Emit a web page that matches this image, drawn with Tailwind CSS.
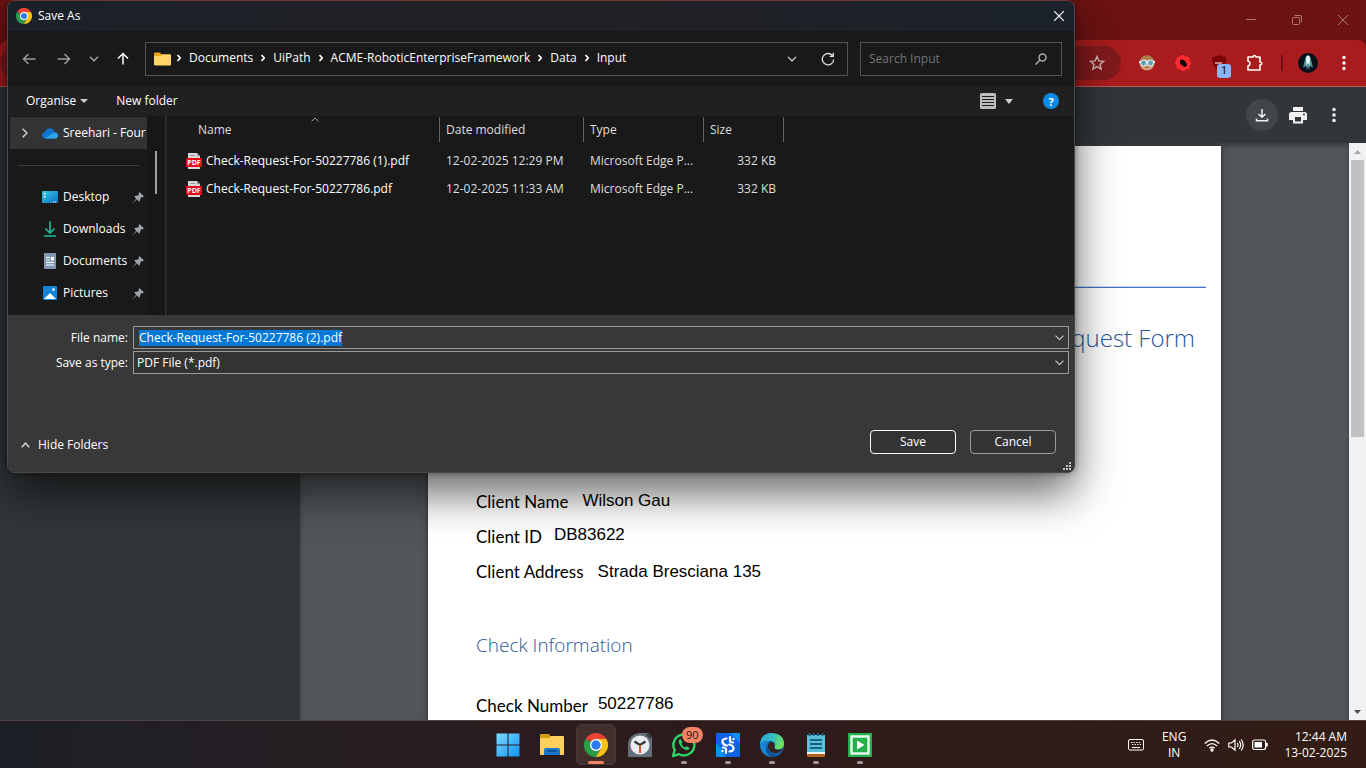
<!DOCTYPE html>
<html lang="en">
<head>
<meta charset="utf-8">
<title>Save As</title>
<script src="https://cdn.jsdelivr.net/npm/@tailwindcss/browser@4"></script>
</head>
<body class="relative flex h-screen flex-col overflow-hidden bg-[#525659] font-['Open_Sans','Noto_Sans',sans-serif] text-xs text-white">

<!-- Browser window -->
<header class="shrink-0 bg-[#6b1212]">
  <div class="flex h-10 items-center justify-end">
    <button class="grid h-10 w-[46px] place-items-center" aria-label="Minimise"><svg width="10" height="10" stroke="#b07777" fill="none"><path d="M0 4.500h10"/></svg></button>
    <button class="grid h-10 w-[46px] place-items-center" aria-label="Restore"><svg width="10" height="10" stroke="#b07777" fill="none"><rect x=".5" y="2.500" width="7" height="7" rx="1"/><path d="M2.500.5H8q1.500 0 1.500 1.500v5.500"/></svg></button>
    <button class="grid h-10 w-[46px] place-items-center" aria-label="Close window"><svg width="10" height="10" stroke="#b07777" fill="none"><path d="M0 0l10 10M10 0L0 10"/></svg></button>
  </div>
  <div class="flex h-[47px] items-center justify-end rounded-t-lg border-b border-[#c05a5a] bg-[#a81c1d] pr-3">
    <div class="flex h-[34px] flex-1 items-center justify-end rounded-full bg-[#811a1b] pr-4">
      <button aria-label="Bookmark"><svg width="16" height="16" viewBox="0 0 16 16" fill="none" stroke="#d6b8b8" stroke-width="1.400"><path d="M8 1.500l1.900 4.400 4.700.4-3.600 3.100 1.100 4.700L8 11.600l-4.100 2.500L5 9.400 1.400 6.300l4.700-.4z"/></svg></button>
    </div>
    <div class="flex items-center">
      <button class="ml-2 grid w-9 place-items-center" aria-label="Extension one"><svg width="16" height="16" viewBox="0 0 16 16"><circle cx="8" cy="8" r="7.500" fill="#d3a27c"/><path d="M1 6Q3 .5 8 .5T15 6L8 4z" fill="#a87a4c"/><path d="M0 6h16v2H0z" fill="#e6eef0"/><circle cx="4.500" cy="8" r="3" fill="#5f9db4" stroke="#e6f4f6"/><circle cx="11.500" cy="8" r="3" fill="#5f9db4" stroke="#e6f4f6"/><path d="M6 12.500h4" stroke="#9d5f45"/></svg></button>
      <button class="grid w-9 place-items-center" aria-label="Extension two"><svg width="16" height="16" viewBox="0 0 16 16"><g fill="#ff2c33"><circle cx="8" cy="8" r="6"/><circle cx="8" cy="3" r="3"/><circle cx="8" cy="13" r="3"/><circle cx="3" cy="8" r="3"/><circle cx="13" cy="8" r="3"/><circle cx="4" cy="4" r="2.500"/><circle cx="12" cy="4" r="2.500"/><circle cx="4" cy="12" r="2.500"/><circle cx="12" cy="12" r="2.500"/></g><path d="M5 5l2-.5 2 .5 2.500 3 .5 3-3 1-2-2-2-1z" fill="#120405"/></svg></button>
      <button class="relative grid w-9 place-items-center" aria-label="Extension three, 1 alert"><svg width="16" height="18" viewBox="0 0 16 18"><path d="M8 1Q4 3 1 3q0 10 7 13.500Q15 13 15 3 12 3 8 1z" fill="#780407"/><path d="M4 9h7" stroke="#e8b0b0" stroke-width="1.500"/></svg><span class="absolute top-2.5 left-4 grid h-3.5 w-3.5 place-items-center rounded-[3px] bg-[#8ab4f8] font-['Roboto'] text-[10px] font-medium text-[#202124]">1</span></button>
      <button class="grid w-9 place-items-center" aria-label="Extensions"><svg width="18" height="18" viewBox="0 0 18 18" fill="none" stroke="#fff" stroke-width="1.600" stroke-linejoin="round"><path d="M2 3h5q.3-1.500 1.500-1.500T10 3h4v5q1.800.2 1.800 1.500T14 11v5H2v-4q2-.5 2-2.500T2 7z"/></svg></button>
    </div>
    <div class="mx-2 h-4 w-0.5 bg-[#6f1213]"></div>
    <button class="ml-[7px] h-5 w-5 rounded-full bg-[#090f1a]" aria-label="Profile"><svg width="20" height="20" viewBox="0 0 20 20"><path d="M10 2.500q2.500 0 3 4l2 8-3-1.500-1 4-1-4-1 4-1-4-3 1.500 2-8q.5-4 3-4z" fill="#4f9498"/><path d="M10 2.500q2 0 2 4l-.5 6L10 10l-1.500 2.500-.5-6q0-4 2-4z" fill="#dff5f2"/></svg></button>
    <button class="ml-4 grid w-5 place-items-center" aria-label="Chrome menu"><svg width="4" height="16" fill="#fff"><circle cx="2" cy="2.500" r="1.700"/><circle cx="2" cy="8" r="1.700"/><circle cx="2" cy="13.500" r="1.700"/></svg></button>
  </div>
  <div class="flex h-14 items-center justify-end gap-1 bg-[#323639] pr-4">
    <button class="grid h-8 w-8 place-items-center rounded-full bg-[#434649]" aria-label="Download"><svg width="14" height="14" viewBox="0 0 14 14" fill="none" stroke="#f1f1f1" stroke-width="1.500"><path d="M7 1v8M3.500 6L7 9.300 10.500 6M1.500 10.500v2.300h11v-2.300"/></svg></button>
    <button class="grid h-8 w-8 place-items-center" aria-label="Print"><svg width="18" height="17" viewBox="0 0 18 17"><path fill="#f1f1f1" d="M4 0h10v4H4zM2.500 5h13Q18 5 18 7.500V13h-4v3.500H4V13H0V7.500Q0 5 2.500 5z"/><path fill="#323639" d="M6 10h6v4.500H6z"/><circle cx="15" cy="7.500" r="1" fill="#323639"/></svg></button>
    <button class="grid h-8 w-8 place-items-center" aria-label="More"><svg width="4" height="16" fill="#f1f1f1"><circle cx="2" cy="2.500" r="1.800"/><circle cx="2" cy="8" r="1.800"/><circle cx="2" cy="13.500" r="1.800"/></svg></button>
  </div>
</header>

<main class="flex min-h-0 flex-1">
  <aside class="w-[300px] shrink-0 bg-[#323639]"></aside>
  <div class="flex min-w-0 flex-1 justify-center overflow-hidden bg-[#525659] pt-[3px] shadow-[inset_0_3px_4px_#3a3d40]">
    <article class="h-[1122px] w-[793px] shrink-0 bg-white pl-12 font-['Lato',sans-serif] text-[17px] text-black shadow-[0_0_5px_#222]">
      <div class="-ml-8 mr-[15px] h-[142px] border-b border-[#4472c4] shadow-[inset_0_-1px_#c9d6ee]"></div>
      <h1 class="mr-[26px] pt-[30px] text-right font-['Open_Sans'] text-2xl leading-10 font-light text-[#2f5597]">Check Request Form</h1>
      <dl class="mt-[127px]">
        <div class="flex h-[35px] items-center gap-3.5"><dt>Client Name</dt><dd class="pb-0.5 font-['Liberation_Sans']">Wilson Gau</dd></div>
        <div class="flex h-[35px] items-center gap-3"><dt>Client ID</dt><dd class="pb-1 font-['Liberation_Sans']">DB83622</dd></div>
        <div class="flex h-[35px] items-center gap-3.5"><dt>Client Address</dt><dd class="font-['Liberation_Sans']">Strada Bresciana 135</dd></div>
      </dl>
      <h2 class="mt-[35px] font-['Open_Sans'] text-[19px] leading-10 font-light text-[#2f5597]">Check Information</h2>
      <dl class="mt-6">
        <div class="flex h-[35px] items-center gap-2.5"><dt>Check Number</dt><dd class="pb-1 font-['Liberation_Sans']">50227786</dd></div>
      </dl>
    </article>
  </div>
  <div class="flex w-[17px] shrink-0 flex-col items-center bg-[#f1f1f1]">
    <svg class="h-[17px] shrink-0" width="9" height="17"><path d="M1 11h7L4.500 7z" fill="#a3a3a3"/></svg>
    <div class="h-[277px] w-[13px] bg-[#c1c1c1]"></div>
    <svg class="mt-auto h-[17px] shrink-0" width="9" height="17"><path d="M1 7h7l-3.500 4z" fill="#505050"/></svg>
  </div>
</main>

<!-- Taskbar -->
<footer class="grid h-12 shrink-0 grid-cols-[1fr_auto_1fr] items-center border-t border-[#514040] bg-linear-to-r from-[#1d2027] via-[#2d1b1c] to-[#331c15]">
  <div></div>
  <nav class="flex h-full pl-0.5">
    <button class="grid w-11 place-items-center" aria-label="Start"><svg width="24" height="24" viewBox="0 0 24 24"><defs><linearGradient id="w" x2="1" y2="1"><stop stop-color="#7fdcff"/><stop offset="1" stop-color="#0a93f5"/></linearGradient></defs><path fill="url(#w)" d="M.5.5h11v11H.5zM12.500.5h11v11h-11zM.5 12.500h11v11H.5zM12.500 12.500h11v11h-11z"/></svg></button>
    <button class="grid w-11 place-items-center" aria-label="File Explorer"><svg width="26" height="24" viewBox="0 0 26 24"><path d="M1 2q0-1 1-1h8l2 3v4H1z" fill="#d99a0b"/><path d="M1 5h9l2-2h12q1 0 1 1v17q0 1-1 1H2q-1 0-1-1z" fill="#ffd15c"/><path d="M5 22v-5q0-2 2-2h12q2 0 2 2v5z" fill="#1c76c8"/><path d="M8 18h10" stroke="#0f559b" stroke-width="2"/></svg></button>
    <button class="relative my-[3px] ml-0.5 grid w-10 place-items-center rounded-[5px] border border-[#4a3632] bg-[#41302c]" aria-label="Chrome"><svg width="24" height="24" viewBox="0 0 24 24"><path d="M12 12L1.600 6A12 12 0 0 1 22.400 6z" fill="#ea4335"/><path d="M12 12L1.600 6A12 12 0 0 0 12 24l5-9z" fill="#2a9d4a"/><path d="M12 12V6h10.400A12 12 0 0 1 12 24l5.200-9z" fill="#fbc116"/><circle cx="12" cy="12" r="6" fill="#fff"/><circle cx="12" cy="12" r="4.700" fill="#2f7bf0"/></svg><span class="absolute bottom-0 h-[3px] w-4 rounded-full bg-[#f58467]"></span></button>
    <button class="ml-0.5 grid w-11 place-items-center" aria-label="Clock"><svg width="26" height="26" viewBox="0 0 26 26"><path d="M1 24V12Q2 2 13 1h8l4 4v19q0 1-1 1H2q-1 0-1-1z" fill="#66707a"/><path d="M21 1l4 4-2 2-4-4z" fill="#39424c"/><circle cx="13" cy="13" r="9.500" fill="#e9ecef"/><path d="M7.500 9.500L13 13l5.500-3.500" stroke="#333" stroke-width="2.200" fill="none"/><path d="M13 13v8" stroke="#d8512a" stroke-width="2"/></svg></button>
    <button class="relative grid w-11 place-items-center" aria-label="WhatsApp, 90 unread"><svg width="26" height="26" viewBox="0 0 26 26"><path d="M2 24l1.700-6A10.500 10.500 0 1 1 8 22.200z" fill="none" stroke="#2bd366" stroke-width="2.400" stroke-linejoin="round"/><path d="M9.300 7q-2 1-1.500 3.300Q9.500 16 15 18q3 .5 3.700-2l-3.200-1.800-1.500 1.200q-2.500-1-3.700-3.700l1.200-1.500z" fill="#2bd366"/></svg><span class="absolute top-1.5 left-5 rounded-full bg-[#f58467] px-1 text-[11px] leading-4 text-[#241512]">90</span><span class="absolute bottom-1 h-[3px] w-1.5 rounded-full bg-[#a39a98]"></span></button>
    <button class="relative grid w-11 place-items-center" aria-label="S app"><svg width="24" height="24" viewBox="0 0 24 24"><path d="M0 0h24v24H0z" fill="#0f62e6"/><path d="M10 24Q4 12 0 10v14zM24 0v10L14 0z" fill="#0a8ff2"/><g fill="none" stroke="#fff" stroke-width="2.200" stroke-linecap="round"><path d="M10.500 5.500Q6 6 6.500 9t4.500 3.500M13.500 18.500q4.500-.5 4-3.500T13 11.500M14 4v4q.3 1.300 3 1.500M10 20v-4q-.3-1.300-3-1.500"/></g><circle cx="17.500" cy="6" r="1.200" fill="#fff"/><circle cx="6.500" cy="18" r="1.200" fill="#fff"/></svg><span class="absolute bottom-1 h-[3px] w-1.5 rounded-full bg-[#a39a98]"></span></button>
    <button class="relative grid w-11 place-items-center" aria-label="Edge"><svg width="24" height="24" viewBox="0 0 24 24"><defs><linearGradient id="e" x2="1" y2=".3"><stop stop-color="#2aa4dc"/><stop offset=".6" stop-color="#35c1bd"/><stop offset="1" stop-color="#6ee05e"/></linearGradient></defs><circle cx="12" cy="12" r="12" fill="#1467b3"/><path d="M0 11Q1 0 12 0q12 1 12 11 0 5-6 5.500-4 0-3-3 1-4-3-5.500-6-1-12 3z" fill="url(#e)"/><path d="M8 14q0-5 4-5 3 1 2.500 4-1 3.500 3 3.800 3 0 5.500-1.500-2 4-7 5Q9 20 8 14z" fill="#33201f"/><path d="M0 11q3-4 9-3-4 3-3 8 1 5 6 8Q1 23 0 11z" fill="#1b84cf"/><path d="M8 14q0 7 8 7.500 3 0 5-2-3 4.500-9 4.500-6-2-6-7 0-2 2-3z" fill="#0f4f97"/></svg><span class="absolute bottom-1 h-[3px] w-1.5 rounded-full bg-[#a39a98]"></span></button>
    <button class="relative grid w-11 place-items-center" aria-label="Notepad"><svg width="20" height="24" viewBox="0 0 20 24"><path d="M1 2h18v19H1z" fill="#59bfdc"/><path d="M1 20h18v3q0 1-1 1H2q-1 0-1-1z" fill="#b5651d"/><path d="M1 19h18v2H1z" fill="#f3f3f3"/><path d="M3.500 0v3M7.500 0v3M12 0v3M16.500 0v3" stroke="#156a8a" stroke-width="1.800"/><path d="M4 7h12M4 11h12M4 15h12" stroke="#14617f" stroke-width="1.800"/></svg><span class="absolute bottom-1 h-[3px] w-1.5 rounded-full bg-[#a39a98]"></span></button>
    <button class="relative grid w-11 place-items-center" aria-label="Camtasia"><svg width="24" height="24" viewBox="0 0 24 24"><path d="M0 0h24v24H0z" fill="#23b14d"/><path d="M3.500 3.500h17v17h-17z" fill="none" stroke="#e9f8ec" stroke-width="2.400"/><path d="M9 7.500l7.500 4.500L9 16.500z" fill="#fff"/></svg><span class="absolute bottom-1 h-[3px] w-1.5 rounded-full bg-[#a39a98]"></span></button>
  </nav>
  <div class="flex items-center justify-end pr-[19px]">
    <svg class="mr-[18px]" width="16" height="12" viewBox="0 0 16 12" fill="none" stroke="#fff"><rect x=".5" y=".5" width="15" height="10.500" rx="1.500"/><path d="M3 3.500h10M4 5.500h9" stroke-dasharray="1.300 1.300"/><path d="M4 8.500h8"/></svg>
    <div class="mr-[18px] text-center leading-4">ENG<br>IN</div>
    <div class="flex items-center gap-2">
      <svg width="16" height="14" viewBox="0 0 16 14" fill="none" stroke="#fff" stroke-width="1.300"><path d="M.8 5.500Q8-1.500 15.200 5.500M3 8q5-4.800 10 0M5.300 10.300Q8 8 10.700 10.300"/><circle cx="8" cy="12" r="1" fill="#fff"/></svg>
      <svg width="16" height="14" viewBox="0 0 16 14" fill="none" stroke="#fff" stroke-width="1.200"><path d="M.8 5h2.700L7 1.800v10.400L3.500 9H.8zM9.300 5q1.400 2 0 4M11.300 3.200q2.700 3.800 0 7.600M13.200 1.500q4 5.500 0 11"/></svg>
      <svg width="16" height="12" viewBox="0 0 16 12"><rect x=".6" y="1" width="13" height="9.500" rx="2" fill="none" stroke="#fff" stroke-width="1.200"/><rect x="2.500" y="3" width="7.500" height="5.500" fill="#fff"/><path d="M14 4h1.800v3.500H14z" fill="#fff"/></svg>
    </div>
    <time class="ml-4 text-right leading-4">12:44 AM<br>13-02-2025</time>
  </div>
</footer>

<!-- Save As dialog -->
<section role="dialog" aria-label="Save As" class="absolute top-0 right-[291px] left-[7px] flex flex-col overflow-hidden rounded-lg border border-[#4a4a4a] border-t-[#6b3533] bg-[#191919] shadow-[0_20px_44px_rgba(0,0,0,0.6),0_0_6px_rgba(0,0,0,0.4)]">
  <div class="flex h-[30px] items-center bg-linear-to-r from-[#1b2129] via-[#212024] to-[#1b222b] pl-2">
    <svg width="16" height="16" viewBox="0 0 24 24"><path d="M12 12L1.600 6A12 12 0 0 1 22.400 6z" fill="#ea4335"/><path d="M12 12L1.600 6A12 12 0 0 0 12 24l5-9z" fill="#2a9d4a"/><path d="M12 12V6h10.400A12 12 0 0 1 12 24l5.200-9z" fill="#fbc116"/><circle cx="12" cy="12" r="6" fill="#fff"/><circle cx="12" cy="12" r="4.500" fill="#2f7bf0"/></svg>
    <span class="ml-1.5">Save As</span>
    <button class="ml-auto grid h-full w-[30px] place-items-center" aria-label="Close"><svg width="10" height="10" stroke="#fff" fill="none" stroke-width="1.200"><path d="M0 0l10 10M10 0L0 10"/></svg></button>
  </div>

  <div class="flex h-[55px] items-center pr-3 pl-3.5">
    <button class="w-3.5" aria-label="Back"><svg width="14" height="12" fill="none" stroke="#9a9a9a" stroke-width="1.500"><path d="M13.500 6H1.500M6.500 1L1.500 6l5 5"/></svg></button>
    <button class="ml-[21px] w-3.5" aria-label="Forward"><svg width="14" height="12" fill="none" stroke="#9a9a9a" stroke-width="1.500"><path d="M.5 6h12M7.500 1l5 5-5 5"/></svg></button>
    <button class="ml-[18px] w-2.5" aria-label="Recent locations"><svg width="10" height="6" fill="none" stroke="#9a9a9a" stroke-width="1.600"><path d="M1 .8l4 4 4-4"/></svg></button>
    <button class="ml-[18px] w-3" aria-label="Up"><svg width="12" height="13" fill="none" stroke="#fff" stroke-width="1.500"><path d="M6 12.500V1.500M1 6.500l5-5 5 5"/></svg></button>
    <div class="ml-4 flex h-[34px] min-w-0 flex-1 items-center border border-[#535353] pl-2">
      <svg class="shrink-0" width="17" height="14" viewBox="0 0 17 14"><path d="M0 1.500Q0 .5 1 .5h5L8 3v3H0z" fill="#e9a50d"/><path d="M0 4h6l2-1.800h8q1 0 1 1V12.500q0 1-1 1H1q-1 0-1-1z" fill="#ffd566"/></svg>
      <nav class="flex items-center gap-2 pb-px pl-1.5">
        <svg width="4" height="8" fill="none" stroke="#fff" stroke-width="1.600"><path d="M.5 1L3.300 4 .5 7"/></svg><a href="#">Documents</a>
        <svg width="4" height="8" fill="none" stroke="#fff" stroke-width="1.600"><path d="M.5 1L3.300 4 .5 7"/></svg><a href="#">UiPath</a>
        <svg width="4" height="8" fill="none" stroke="#fff" stroke-width="1.600"><path d="M.5 1L3.300 4 .5 7"/></svg><a href="#">ACME-RoboticEnterpriseFramework</a>
        <svg width="4" height="8" fill="none" stroke="#fff" stroke-width="1.600"><path d="M.5 1L3.300 4 .5 7"/></svg><a href="#">Data</a>
        <svg width="4" height="8" fill="none" stroke="#fff" stroke-width="1.600"><path d="M.5 1L3.300 4 .5 7"/></svg><a href="#">Input</a>
      </nav>
      <button class="ml-auto" aria-label="Previous locations"><svg width="10" height="6" fill="none" stroke="#e0e0e0" stroke-width="1.200"><path d="M1 .8l4 4 4-4"/></svg></button>
      <button class="mr-3 ml-6" aria-label="Refresh"><svg width="14" height="14" viewBox="0 0 14 14" fill="none" stroke="#e0e0e0" stroke-width="1.300"><path d="M12.700 7.500A5.700 5.700 0 1 1 10.500 2.700L12 4.200M12.300.8v3.500H8.700"/></svg></button>
    </div>
    <label class="ml-3 flex h-[34px] w-[202px] items-center border border-[#535353] pr-3.5 pl-2">
      <input class="min-w-0 flex-1 bg-transparent outline-none placeholder:text-[#747474]" type="text" placeholder="Search Input" aria-label="Search Input">
      <svg width="12" height="12" viewBox="0 0 12 12" fill="none" stroke="#a8a8a8" stroke-width="1.500"><circle cx="7.500" cy="4.500" r="3.500"/><path d="M5 7L.5 11.500"/></svg>
    </label>
  </div>

  <div class="flex h-[30px] items-center bg-[#202020] pr-[15px] pl-[18px]">
    <button class="flex items-center gap-1">Organise<svg width="8" height="4"><path d="M0 0h8L4 4z" fill="#cfcfcf"/></svg></button>
    <button class="ml-7">New folder</button>
    <button class="ml-auto flex items-center gap-[9px]" aria-label="Change your view"><svg width="16" height="16"><rect width="16" height="16" rx="1.500" fill="#bdbdbd"/><path d="M2 3.500h12M2 6.500h12M2 9.500h12M2 12.500h12" stroke="#1b1b1b"/></svg><svg width="8" height="5"><path d="M0 0h8L4 5z" fill="#cfcfcf"/></svg></button>
    <button class="ml-[30px] grid h-4 w-4 place-items-center rounded-full bg-[#0c8be6] text-[11px] leading-none font-bold" aria-label="Help">?</button>
  </div>

  <div class="flex h-[199px]">
    <div class="w-[139px] shrink-0 overflow-hidden pt-px whitespace-nowrap">
      <a href="#" class="ml-0.5 flex h-8 items-center overflow-hidden bg-[#333]"><svg class="mr-[14px] ml-3 shrink-0" width="6" height="10" fill="none" stroke="#d0d0d0" stroke-width="1.500"><path d="M.7.700L5 5 .7 9.300"/></svg><svg class="mr-[5px] shrink-0" width="16" height="11" viewBox="0 0 16 11"><path d="M3.500 10.500Q0 10 0 7.200 .3 4.500 3 4 4.500.3 8 .3 11.500.5 12.500 4 15.700 4.500 16 7.500 15.500 10.500 13 10.500z" fill="#1274cf"/><path d="M3 10.300L11 5.300Q13 4 14.500 5.100 16 6 16 7.700 15.500 10.500 13 10.500H4z" fill="#2aa5ec"/></svg>Sreehari - Four N</a>
      <div class="flex h-8 items-center pr-2 pl-2.5"><div class="h-px w-full bg-[#3d3d3d]"></div></div>
      <a href="#" class="flex h-8 items-center pl-[34px]"><svg width="16" height="12" viewBox="0 0 16 12"><defs><linearGradient id="d" x2="1" y2="1"><stop stop-color="#35c9e6"/><stop offset="1" stop-color="#1272c4"/></linearGradient></defs><rect width="16" height="12" rx="1" fill="url(#d)"/><path d="M2 2h1.500v1.500H2zM2 5h1.500v1.500H2zM11 10.500h1v1h-1zM13 10.500h1v1h-1z" fill="#fff"/></svg><span class="ml-[5px] flex-1">Desktop</span><svg class="mr-[3px]" width="11" height="11" viewBox="0 0 11 11"><path d="M6.500 0L11 4.500 9.800 5.200 8.800 5 7.200 7 7 9.200 6 9.500 3.800 7.300.6 10.500 0 10.800.4 10 3.200 6.800 1.500 5 1.800 4 4 3.800 6 2.200 5.800 1z" fill="#9aa3aa"/></svg></a>
      <a href="#" class="flex h-8 items-center pl-[34px]"><svg width="16" height="16" viewBox="0 0 16 16" fill="none" stroke="#1fb899" stroke-width="1.700"><path d="M8 .5v11M3.500 7.500L8 12l4.500-4.500M2 15h12"/></svg><span class="ml-[5px] flex-1">Downloads</span><svg class="mr-[3px]" width="11" height="11" viewBox="0 0 11 11"><path d="M6.500 0L11 4.500 9.800 5.200 8.800 5 7.200 7 7 9.200 6 9.500 3.800 7.300.6 10.500 0 10.800.4 10 3.200 6.800 1.500 5 1.800 4 4 3.800 6 2.200 5.800 1z" fill="#9aa3aa"/></svg></a>
      <a href="#" class="flex h-8 items-center pl-[34px]"><svg width="16" height="16" viewBox="0 0 16 16"><rect x="2" width="12" height="16" rx="1" fill="#8298b3"/><path d="M4 4.500h4M4 7h4M4 9.500h8M4 12h8" stroke="#fff"/><path d="M9 4h3v3.500H9z" fill="#fff"/></svg><span class="ml-[5px] flex-1">Documents</span><svg class="mr-[3px]" width="11" height="11" viewBox="0 0 11 11"><path d="M6.500 0L11 4.500 9.800 5.200 8.800 5 7.200 7 7 9.200 6 9.500 3.800 7.300.6 10.500 0 10.800.4 10 3.200 6.800 1.500 5 1.800 4 4 3.800 6 2.200 5.800 1z" fill="#9aa3aa"/></svg></a>
      <a href="#" class="flex h-8 items-center pl-[34px]"><svg width="16" height="14" viewBox="0 0 16 14"><rect x="1" width="14" height="14" rx="1" fill="#1583d8"/><path d="M2 13L8 7l6 6z" fill="#fff"/><circle cx="11.500" cy="3.500" r="1.300" fill="#fff"/></svg><span class="ml-[5px] flex-1">Pictures</span><svg class="mr-[3px]" width="11" height="11" viewBox="0 0 11 11"><path d="M6.500 0L11 4.500 9.800 5.200 8.800 5 7.200 7 7 9.200 6 9.500 3.800 7.300.6 10.500 0 10.800.4 10 3.200 6.800 1.500 5 1.800 4 4 3.800 6 2.200 5.800 1z" fill="#9aa3aa"/></svg></a>
    </div>
    <div class="w-[18px] shrink-0 bg-[#171717] pt-[35px]"><div class="mx-auto h-[43px] w-0.5 bg-[#9f9f9f]"></div></div>
    <div class="w-0.5 shrink-0 bg-[#2b2b2b]"></div>
    <div class="relative min-w-0 flex-1">
      <svg class="absolute top-px left-[144px]" width="8" height="5" fill="none" stroke="#a0a0a0"><path d="M.5 4.500L4 1l3.500 3.500"/></svg>
      <table class="w-[617px] table-fixed border-collapse whitespace-nowrap text-[#dedede]">
        <colgroup><col class="w-[273px]"><col class="w-36"><col class="w-[120px]"><col class="w-20"></colgroup>
        <thead>
          <tr class="h-[31px] text-left align-top">
            <th class="p-0 font-normal"><div class="mt-px h-[25px] border-r border-[#636363] pl-[31px] leading-[25px]">Name</div></th>
            <th class="p-0 font-normal"><div class="mt-px h-[25px] border-r border-[#636363] pl-1.5 leading-[25px]">Date modified</div></th>
            <th class="p-0 font-normal"><div class="mt-px h-[25px] border-r border-[#636363] pl-1.5 leading-[25px]">Type</div></th>
            <th class="p-0 font-normal"><div class="mt-px h-[25px] border-r border-[#636363] pl-1.5 leading-[25px]">Size</div></th>
          </tr>
        </thead>
        <tbody>
          <tr class="h-7">
            <td class="p-0 text-white"><div class="flex items-center gap-1 pl-[19px]"><svg width="16" height="16" viewBox="0 0 16 16"><path d="M2 0h9l3 3v13H2z" fill="#d8d8d8"/><path d="M11 0v3h3z" fill="#8a8a8a"/><path d="M4 2.500h5" stroke="#999"/><path d="M0 5h16v9H0z" fill="#e5091a"/><text x="8" y="12" text-anchor="middle" font-family="Open Sans" font-size="7" font-weight="700" fill="#fff">PDF</text></svg>Check-Request-For-50227786 (1).pdf</div></td>
            <td class="p-0 pl-1.5">12-02-2025 12:29 PM</td><td class="p-0 pl-1.5">Microsoft Edge P...</td><td class="p-0 pr-2 text-right">332 KB</td>
          </tr>
          <tr class="h-7">
            <td class="p-0 text-white"><div class="flex items-center gap-1 pl-[19px]"><svg width="16" height="16" viewBox="0 0 16 16"><path d="M2 0h9l3 3v13H2z" fill="#d8d8d8"/><path d="M11 0v3h3z" fill="#8a8a8a"/><path d="M4 2.500h5" stroke="#999"/><path d="M0 5h16v9H0z" fill="#e5091a"/><text x="8" y="12" text-anchor="middle" font-family="Open Sans" font-size="7" font-weight="700" fill="#fff">PDF</text></svg>Check-Request-For-50227786.pdf</div></td>
            <td class="p-0 pl-1.5">12-02-2025 11:33 AM</td><td class="p-0 pl-1.5">Microsoft Edge P...</td><td class="p-0 pr-2 text-right">332 KB</td>
          </tr>
        </tbody>
      </table>
    </div>
  </div>

  <form class="flex h-[157px] flex-col bg-[#383838] pt-[11px]">
    <div class="grid grid-cols-[120px_1fr] items-center gap-x-[5px] gap-y-0.5 pr-[5px]">
      <label for="fn" class="text-right">File name:</label>
      <div class="flex h-[23px] items-center border border-[#9b9b9b] pr-1 pl-[5px]">
        <input id="fn" class="h-4 min-w-0 flex-1 bg-transparent leading-4 caret-transparent outline-none selection:bg-[#0078d7] selection:text-white" type="text" value="Check-Request-For-50227786 (2).pdf" autofocus>
        <button type="button" aria-label="Previous file names"><svg width="9" height="6" fill="none" stroke="#c8c8c8" stroke-width="1.100"><path d="M.5.700l4 4 4-4"/></svg></button>
      </div>
      <label for="ft" class="text-right">Save as type:</label>
      <div class="flex h-[23px] items-center border border-[#9b9b9b] bg-[#333] pr-1 pl-[3px]">
        <select id="ft" class="min-w-0 flex-1 appearance-none bg-transparent leading-4 outline-none"><option>PDF File (*.pdf)</option></select>
        <svg width="9" height="6" fill="none" stroke="#c8c8c8" stroke-width="1.100"><path d="M.5.700l4 4 4-4"/></svg>
      </div>
    </div>
    <div class="mt-auto mb-[18px] flex items-center gap-3.5 pr-[18px] pl-[13px]">
      <button type="button" class="mr-auto flex items-center gap-2 pt-1.5"><svg width="9" height="6" fill="none" stroke="#d0d0d0" stroke-width="1.600"><path d="M.7 5.200l3.800-4 3.800 4"/></svg>Hide Folders</button>
      <button type="button" class="h-6 w-[86px] rounded border border-white bg-[#333]">Save</button>
      <button type="button" class="h-6 w-[86px] rounded border border-[#9b9b9b] bg-[#333]">Cancel</button>
    </div>
  </form>
  <svg class="absolute right-[3px] bottom-0.5" width="8" height="8" fill="#c4c4c4"><path d="M6 0h2v2H6zM3 3h2v2H3zM6 3h2v2H6zM0 6h2v2H0zM3 6h2v2H3zM6 6h2v2H6z"/></svg>
</section>

<script>document.getElementById('fn').select();</script>
</body>
</html>
